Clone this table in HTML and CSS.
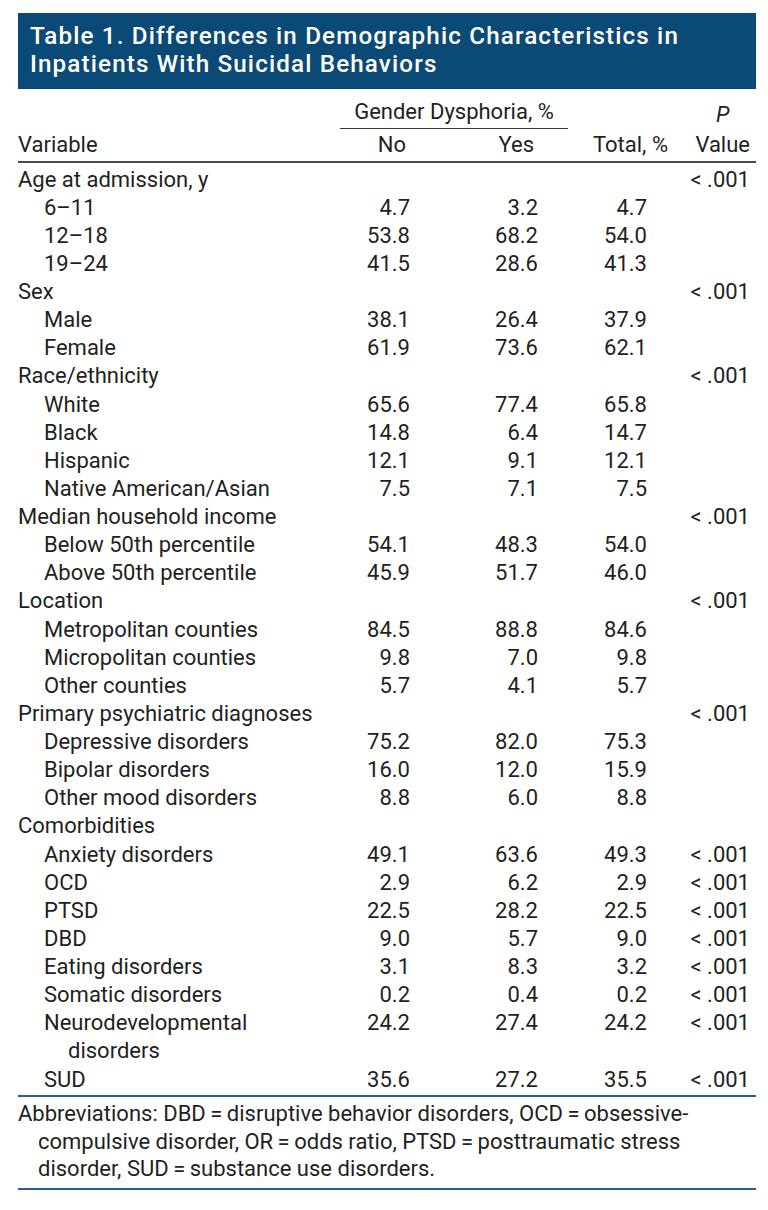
FILE: index.html
```html
<!DOCTYPE html>
<html lang="en">
<head>
<meta charset="utf-8">
<title>Table 1</title>
<link rel="stylesheet" href="styles.css">
</head>
<body>
<div class="table">
  <div class="title">Table 1. Differences in Demographic Characteristics in<br>Inpatients With Suicidal Behaviors</div>
  <div class="head">
    <div class="gd">Gender Dysphoria, %</div>
    <div class="pv"><span class="pv-in"><i>P</i><br>Value</span></div>
    <div class="hv">Variable</div>
    <div class="hno">No</div>
    <div class="hyes">Yes</div>
    <div class="htot">Total, %</div>
  </div>
  <div class="body">
    <div class="row"><div class="lab">Age at admission, y</div><div class="n"></div><div class="n"></div><div class="n"></div><div class="p">&lt; .001</div></div>
    <div class="row"><div class="lab sub">6–11</div><div class="n">4.7</div><div class="n">3.2</div><div class="n">4.7</div><div class="p"></div></div>
    <div class="row"><div class="lab sub">12–18</div><div class="n">53.8</div><div class="n">68.2</div><div class="n">54.0</div><div class="p"></div></div>
    <div class="row"><div class="lab sub">19–24</div><div class="n">41.5</div><div class="n">28.6</div><div class="n">41.3</div><div class="p"></div></div>
    <div class="row"><div class="lab">Sex</div><div class="n"></div><div class="n"></div><div class="n"></div><div class="p">&lt; .001</div></div>
    <div class="row"><div class="lab sub">Male</div><div class="n">38.1</div><div class="n">26.4</div><div class="n">37.9</div><div class="p"></div></div>
    <div class="row"><div class="lab sub">Female</div><div class="n">61.9</div><div class="n">73.6</div><div class="n">62.1</div><div class="p"></div></div>
    <div class="row"><div class="lab">Race/ethnicity</div><div class="n"></div><div class="n"></div><div class="n"></div><div class="p">&lt; .001</div></div>
    <div class="row"><div class="lab sub">White</div><div class="n">65.6</div><div class="n">77.4</div><div class="n">65.8</div><div class="p"></div></div>
    <div class="row"><div class="lab sub">Black</div><div class="n">14.8</div><div class="n">6.4</div><div class="n">14.7</div><div class="p"></div></div>
    <div class="row"><div class="lab sub">Hispanic</div><div class="n">12.1</div><div class="n">9.1</div><div class="n">12.1</div><div class="p"></div></div>
    <div class="row"><div class="lab sub">Native American/Asian</div><div class="n">7.5</div><div class="n">7.1</div><div class="n">7.5</div><div class="p"></div></div>
    <div class="row"><div class="lab">Median household income</div><div class="n"></div><div class="n"></div><div class="n"></div><div class="p">&lt; .001</div></div>
    <div class="row"><div class="lab sub">Below 50th percentile</div><div class="n">54.1</div><div class="n">48.3</div><div class="n">54.0</div><div class="p"></div></div>
    <div class="row"><div class="lab sub">Above 50th percentile</div><div class="n">45.9</div><div class="n">51.7</div><div class="n">46.0</div><div class="p"></div></div>
    <div class="row"><div class="lab">Location</div><div class="n"></div><div class="n"></div><div class="n"></div><div class="p">&lt; .001</div></div>
    <div class="row"><div class="lab sub">Metropolitan counties</div><div class="n">84.5</div><div class="n">88.8</div><div class="n">84.6</div><div class="p"></div></div>
    <div class="row"><div class="lab sub">Micropolitan counties</div><div class="n">9.8</div><div class="n">7.0</div><div class="n">9.8</div><div class="p"></div></div>
    <div class="row"><div class="lab sub">Other counties</div><div class="n">5.7</div><div class="n">4.1</div><div class="n">5.7</div><div class="p"></div></div>
    <div class="row"><div class="lab">Primary psychiatric diagnoses</div><div class="n"></div><div class="n"></div><div class="n"></div><div class="p">&lt; .001</div></div>
    <div class="row"><div class="lab sub">Depressive disorders</div><div class="n">75.2</div><div class="n">82.0</div><div class="n">75.3</div><div class="p"></div></div>
    <div class="row"><div class="lab sub">Bipolar disorders</div><div class="n">16.0</div><div class="n">12.0</div><div class="n">15.9</div><div class="p"></div></div>
    <div class="row"><div class="lab sub">Other mood disorders</div><div class="n">8.8</div><div class="n">6.0</div><div class="n">8.8</div><div class="p"></div></div>
    <div class="row"><div class="lab">Comorbidities</div><div class="n"></div><div class="n"></div><div class="n"></div><div class="p"></div></div>
    <div class="row"><div class="lab sub">Anxiety disorders</div><div class="n">49.1</div><div class="n">63.6</div><div class="n">49.3</div><div class="p">&lt; .001</div></div>
    <div class="row"><div class="lab sub">OCD</div><div class="n">2.9</div><div class="n">6.2</div><div class="n">2.9</div><div class="p">&lt; .001</div></div>
    <div class="row"><div class="lab sub">PTSD</div><div class="n">22.5</div><div class="n">28.2</div><div class="n">22.5</div><div class="p">&lt; .001</div></div>
    <div class="row"><div class="lab sub">DBD</div><div class="n">9.0</div><div class="n">5.7</div><div class="n">9.0</div><div class="p">&lt; .001</div></div>
    <div class="row"><div class="lab sub">Eating disorders</div><div class="n">3.1</div><div class="n">8.3</div><div class="n">3.2</div><div class="p">&lt; .001</div></div>
    <div class="row"><div class="lab sub">Somatic disorders</div><div class="n">0.2</div><div class="n">0.4</div><div class="n">0.2</div><div class="p">&lt; .001</div></div>
    <div class="row"><div class="lab sub hang">Neurodevelopmental<br>disorders</div><div class="n">24.2</div><div class="n">27.4</div><div class="n">24.2</div><div class="p">&lt; .001</div></div>
    <div class="row"><div class="lab sub">SUD</div><div class="n">35.6</div><div class="n">27.2</div><div class="n">35.5</div><div class="p">&lt; .001</div></div>
  </div>
  <div class="foot">Abbreviations: DBD&thinsp;=&thinsp;disruptive behavior disorders, OCD&thinsp;=&thinsp;obsessive-<br>compulsive disorder, OR&thinsp;=&thinsp;odds ratio, PTSD&thinsp;=&thinsp;posttraumatic stress<br>disorder, SUD&thinsp;=&thinsp;substance use disorders.</div>
</div>
</body>
</html>
```
FILE: styles.css
```css
html, body {
  margin: 0;
  padding: 0;
  background: #ffffff;
}

body {
  font-family: Roboto, "Liberation Sans", sans-serif;
  color: #231f20;
  font-size: 22px;
}

.table {
  width: 738px;
  margin: 13px 0 0 18px;
}

.title {
  background: #0b4a76;
  color: #ffffff;
  font-weight: 500;
  font-size: 24.2px;
  letter-spacing: 1.15px;
  line-height: 28.4px;
  height: 76px;
  box-sizing: border-box;
  padding: 8.5px 0 0 12px;
  white-space: nowrap;
}

.head {
  display: grid;
  grid-template-columns: 322px 100px 128px 109px 79px;
  grid-template-rows: auto auto;
  row-gap: 2.5px;
  line-height: 28px;
  padding-bottom: 2px;
  border-bottom: 2px solid #4a4a4a;
}

.gd {
  grid-column: 2 / 4;
  grid-row: 1;
  text-align: center;
  padding-top: 8.5px;
  padding-bottom: 2px;
  border-bottom: 1px solid #3a3a3a;
}

.pv {
  grid-column: 5;
  grid-row: 1 / 3;
  align-self: end;
  text-align: right;
  padding-right: 6px;
  line-height: 29.5px;
}

.pv-in {
  display: inline-block;
  text-align: center;
}

.hv {
  grid-column: 1;
  grid-row: 2;
}

.hno, .hyes {
  grid-row: 2;
  text-align: right;
  padding-right: 34px;
}

.hno { grid-column: 2; }
.hyes { grid-column: 3; }

.htot {
  grid-column: 4;
  grid-row: 2;
  text-align: right;
  padding-right: 9px;
}

.body {
  padding: 2.5px 0 1.4px;
  line-height: 28.125px;
}

.row {
  display: grid;
  grid-template-columns: 322px 100px 128px 109px 79px;
}

.lab.sub {
  padding-left: 26px;
}

.lab.hang {
  padding-left: 50px;
  text-indent: -24px;
}

.n {
  text-align: right;
  padding-right: 30px;
}

.p {
  text-align: right;
  padding-right: 6px;
}

.foot {
  border-top: 2px solid #2d5e8e;
  border-bottom: 2px solid #2d5e8e;
  line-height: 27.5px;
  padding: 3.4px 0 5px 20px;
  text-indent: -20px;
  white-space: nowrap;
}
```
